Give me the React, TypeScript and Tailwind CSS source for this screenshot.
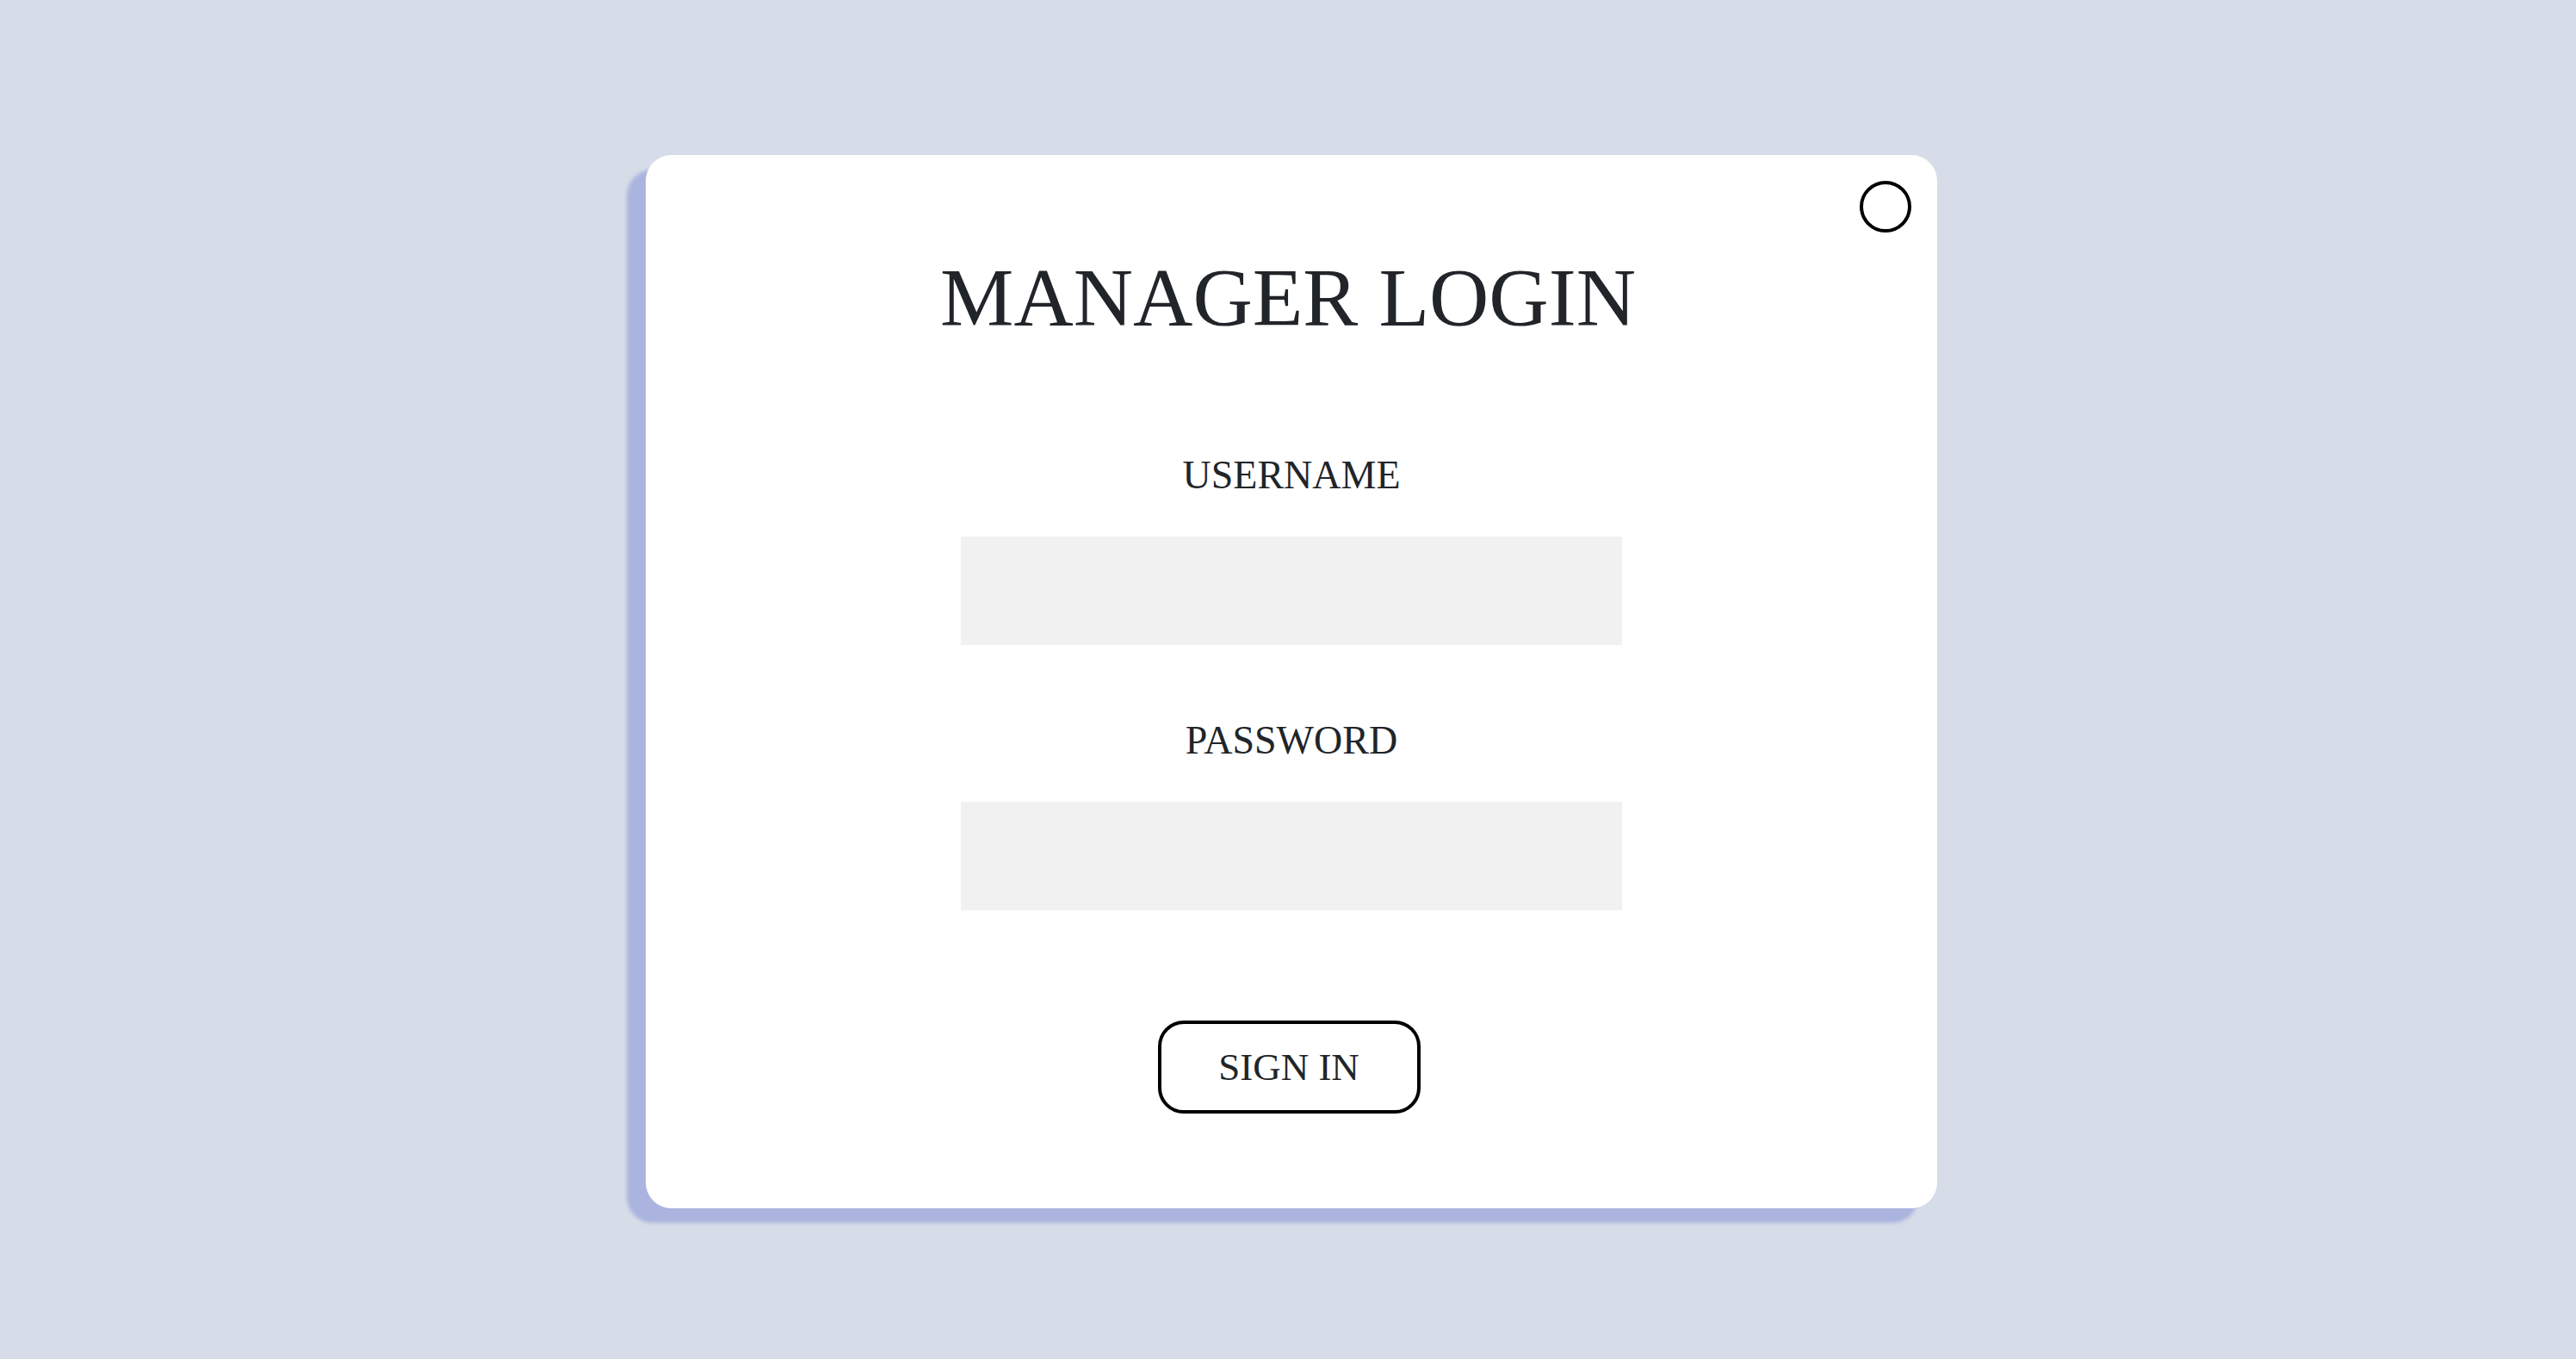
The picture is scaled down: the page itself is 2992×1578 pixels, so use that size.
import { useState } from 'react'

const serif = { fontFamily: '"Liberation Serif", "Times New Roman", serif' }

function Field({ label, type, value, onChange }: { label: string; type: string; value: string; onChange: (v: string) => void }) {
  return (
    <div className="flex flex-col items-center">
      <label className="text-[46px] leading-none text-[#212529]">{label}</label>
      <input
        type={type}
        value={value}
        onChange={(e) => onChange(e.target.value)}
        className="mt-[48px] w-[768px] h-[126px] bg-[#f1f1f1] outline-none px-4 text-[40px] text-[#212529]"
      />
    </div>
  )
}

export default function App() {
  const [username, setUsername] = useState('')
  const [password, setPassword] = useState('')

  return (
    <div className="w-full min-h-screen bg-[#d6dde8] flex justify-center pl-[8px] pt-[180px]" style={serif}>
      <div className="relative w-[1500px] h-[1223px] bg-white rounded-[30px] shadow-[-22px_17px_4px_#abb4de] flex flex-col items-center pt-[118px]">
        {/* close */}
        <button className="absolute top-[30px] right-[30px] w-[60px] h-[60px] rounded-full border-4 border-black bg-white" aria-label="close" />

        <h1 className="text-[96px] leading-none text-[#212529] mr-[8px]">MANAGER LOGIN</h1>

        <div className="mt-[135px]">
          <Field label="USERNAME" type="text" value={username} onChange={setUsername} />
        </div>
        <div className="mt-[88px]">
          <Field label="PASSWORD" type="password" value={password} onChange={setPassword} />
        </div>

        <button className="mt-[128px] w-[305px] h-[108px] rounded-[30px] border-4 border-black bg-white text-[45px] text-[#212529] leading-none mr-[6px]">
          SIGN IN
        </button>
      </div>
    </div>
  )
}
